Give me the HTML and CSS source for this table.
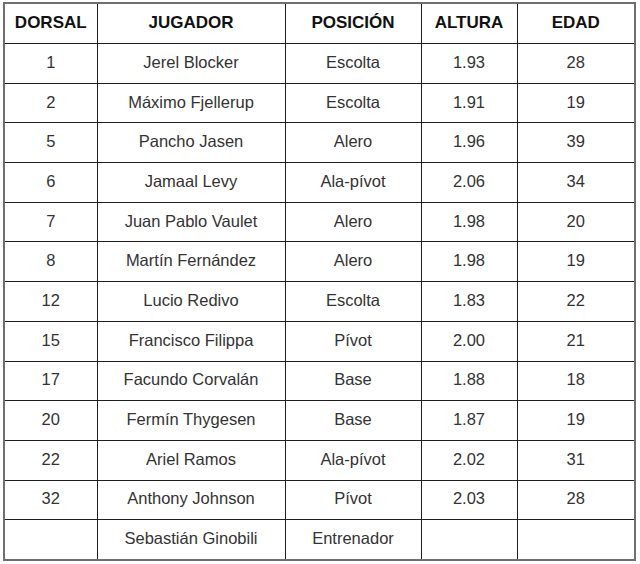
FILE: index.html
```html
<!DOCTYPE html>
<html lang="es">
<head>
<meta charset="utf-8">
<link rel="stylesheet" href="styles.css">
</head>
<body>
<table class="roster">
  <colgroup>
    <col class="c1"><col class="c2"><col class="c3"><col class="c4"><col class="c5">
  </colgroup>
  <thead>
    <tr><th>DORSAL</th><th>JUGADOR</th><th>POSICIÓN</th><th>ALTURA</th><th>EDAD</th></tr>
  </thead>
  <tbody>
    <tr><td>1</td><td>Jerel Blocker</td><td>Escolta</td><td>1.93</td><td>28</td></tr>
    <tr><td>2</td><td>Máximo Fjellerup</td><td>Escolta</td><td>1.91</td><td>19</td></tr>
    <tr><td>5</td><td>Pancho Jasen</td><td>Alero</td><td>1.96</td><td>39</td></tr>
    <tr><td>6</td><td>Jamaal Levy</td><td>Ala-pívot</td><td>2.06</td><td>34</td></tr>
    <tr><td>7</td><td>Juan Pablo Vaulet</td><td>Alero</td><td>1.98</td><td>20</td></tr>
    <tr><td>8</td><td>Martín Fernández</td><td>Alero</td><td>1.98</td><td>19</td></tr>
    <tr><td>12</td><td>Lucio Redivo</td><td>Escolta</td><td>1.83</td><td>22</td></tr>
    <tr><td>15</td><td>Francisco Filippa</td><td>Pívot</td><td>2.00</td><td>21</td></tr>
    <tr><td>17</td><td>Facundo Corvalán</td><td>Base</td><td>1.88</td><td>18</td></tr>
    <tr><td>20</td><td>Fermín Thygesen</td><td>Base</td><td>1.87</td><td>19</td></tr>
    <tr><td>22</td><td>Ariel Ramos</td><td>Ala-pívot</td><td>2.02</td><td>31</td></tr>
    <tr><td>32</td><td>Anthony Johnson</td><td>Pívot</td><td>2.03</td><td>28</td></tr>
    <tr><td></td><td>Sebastián Ginobili</td><td>Entrenador</td><td></td><td></td></tr>
  </tbody>
</table>
</body>
</html>
```

FILE: styles.css
```css
html, body {
  margin: 0;
  padding: 0;
  background: #fff;
}

body {
  padding: 2px 0 0 3px;
  font-family: "Liberation Sans", Arial, sans-serif;
}

.roster {
  border-collapse: collapse;
  table-layout: fixed;
  width: 632px;
  border: 2px solid #6f6f6f;
}

.c1 { width: 93px; }
.c2 { width: 188px; }
.c3 { width: 136px; }
.c4 { width: 96px; }
.c5 { width: 118px; }

.roster th,
.roster td {
  border: 1px solid #1e1e1e;
  text-align: center;
  vertical-align: middle;
  padding: 0 0 2px 0;
}

.roster th {
  height: 37px;
  font-size: 17px;
  font-weight: bold;
  color: #111;
}

.roster td {
  height: 36.7px;
  font-size: 16.5px;
  color: #333;
}
```
